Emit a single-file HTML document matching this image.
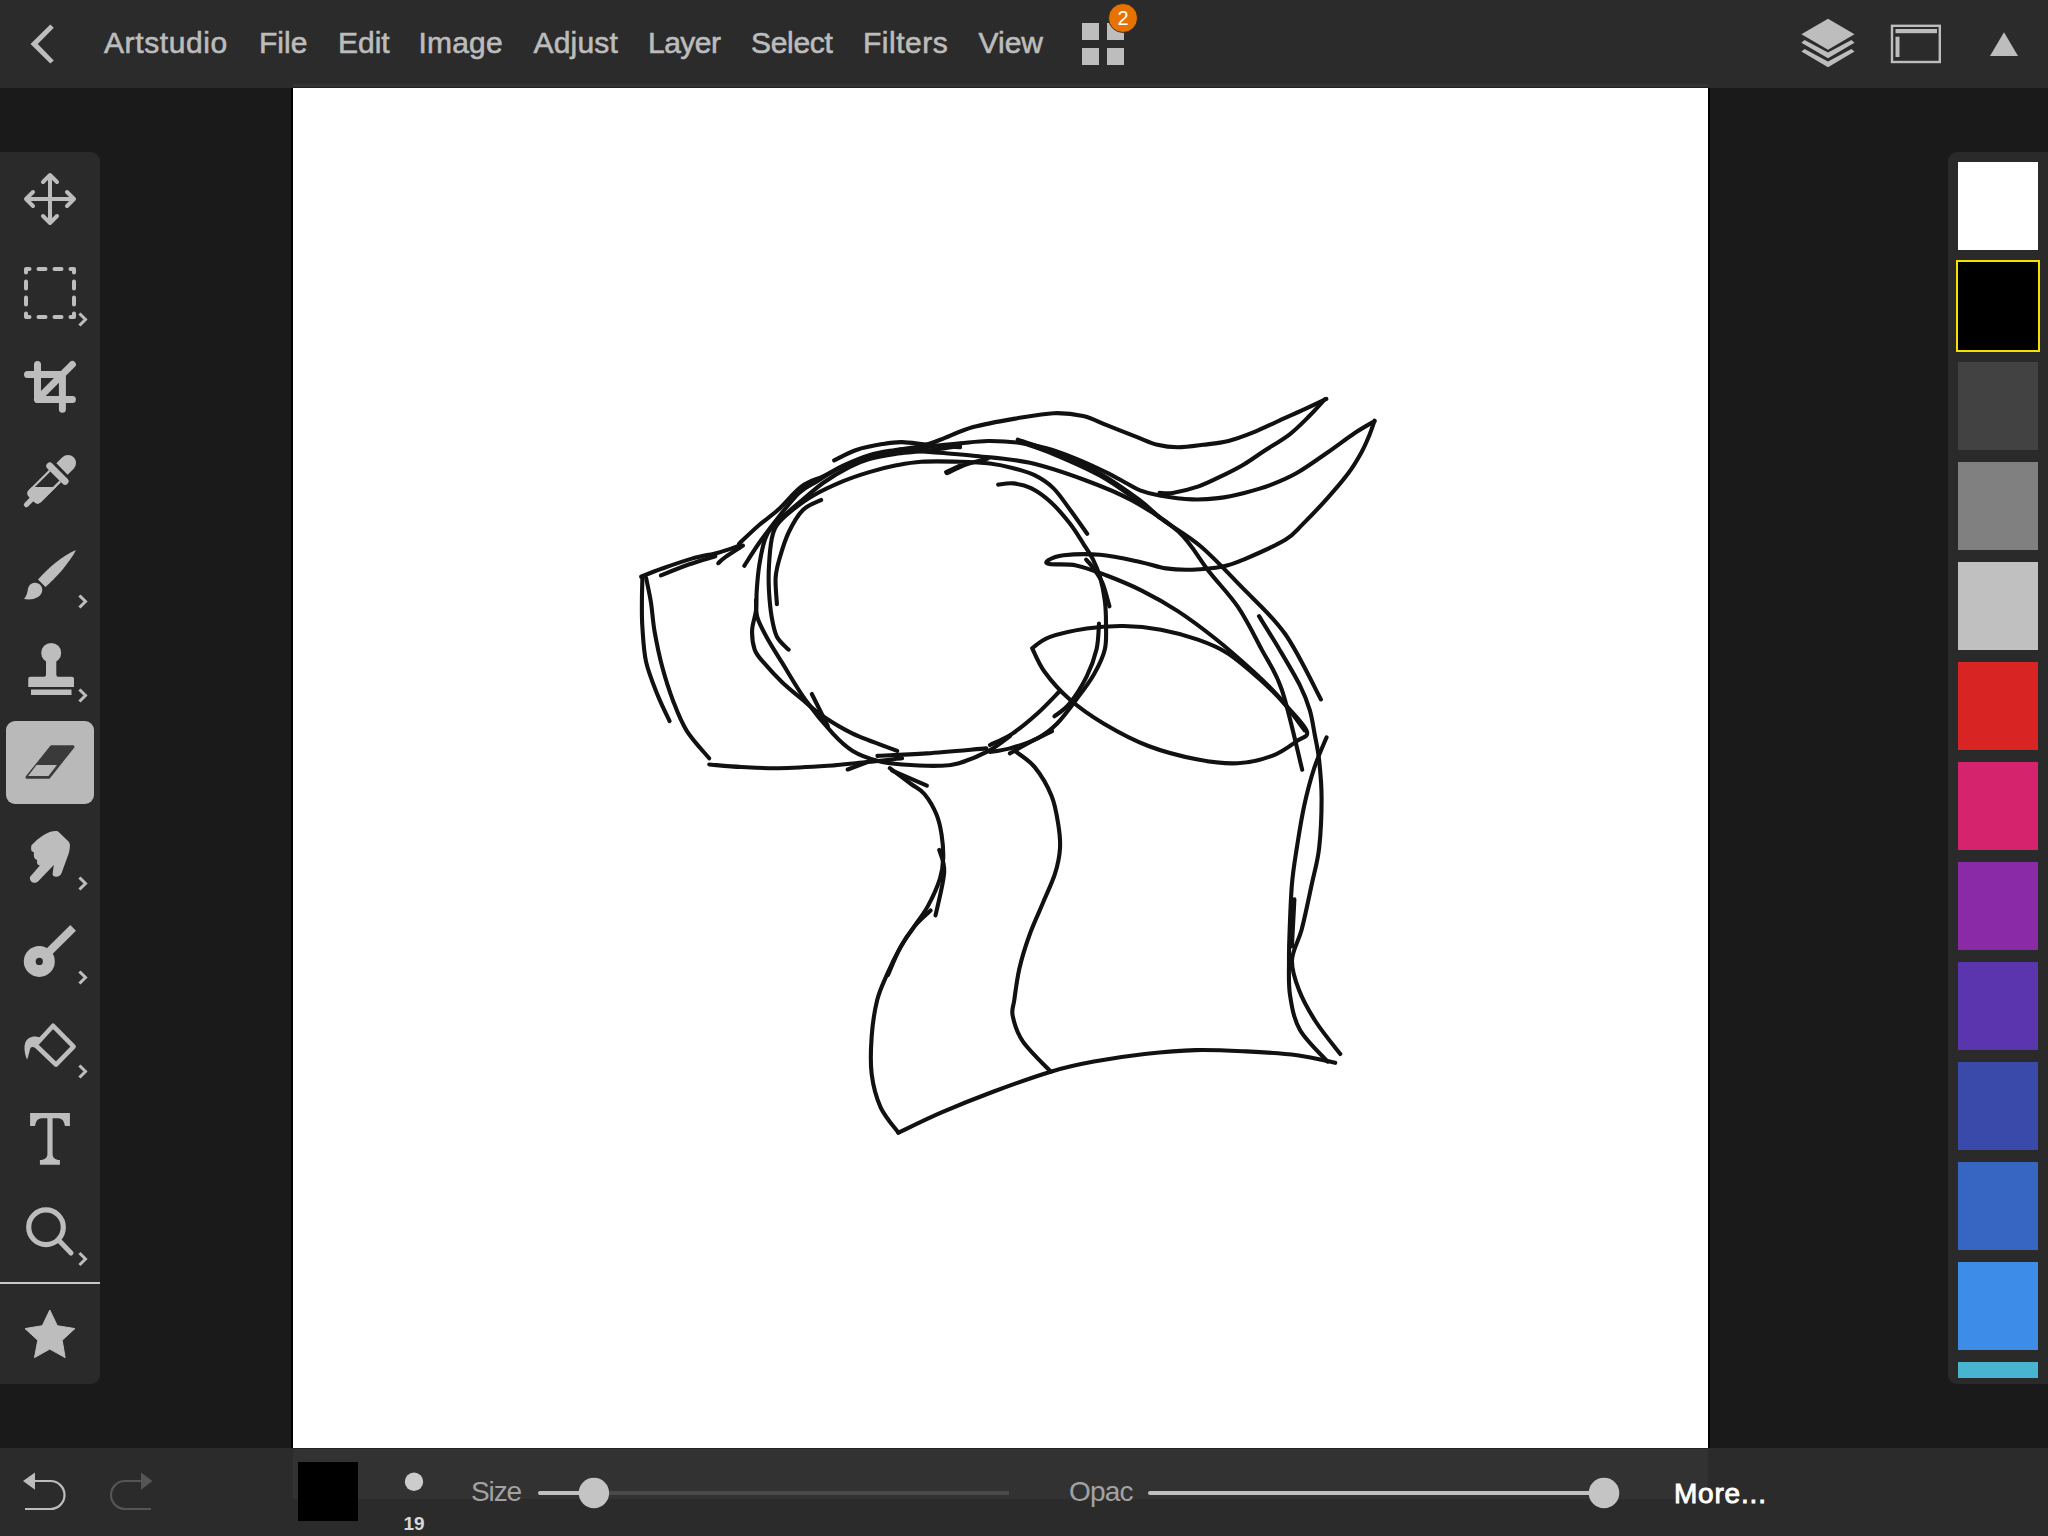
<!DOCTYPE html>
<html><head><meta charset="utf-8">
<style>
html,body{margin:0;padding:0;width:2048px;height:1536px;overflow:hidden;background:#1a1a1a;font-family:"Liberation Sans",sans-serif;}
.a{position:absolute;}
#top{left:0;top:0;width:2048px;height:88px;background:#2b2b2b;}
.m{position:absolute;top:23px;font-size:30px;line-height:40px;color:#bcbcbc;white-space:nowrap;-webkit-text-stroke:0.6px #bcbcbc;}
#canvas{left:293px;top:88px;width:1415px;height:1360px;background:#fff;}
#lb{left:291px;top:88px;width:2px;height:1360px;background:#000;}
#rb{left:1708px;top:88px;width:2px;height:1360px;background:#000;}
#tools{left:0;top:152px;width:100px;height:1232px;background:#2a2a2a;border-radius:0 9px 9px 0;}
#pal{left:1948px;top:152px;width:100px;height:1232px;background:#2a2a2a;border-radius:9px 0 0 9px;overflow:hidden;}
.sw{position:absolute;left:10px;width:80px;height:88px;}
#bot{left:0;top:1448px;width:2048px;height:88px;background:#2b2b2b;}
#botl{left:293px;top:1449px;width:1415px;height:50px;background:#323232;}
#sel{left:6px;top:721px;width:88px;height:83px;background:#b9b9b9;border-radius:9px;}
.t{position:absolute;white-space:nowrap;}
svg{position:absolute;left:0;top:0;}
</style></head><body>
<div id="top" class="a">
  <span class="m" style="left:104px;letter-spacing:0.6px">Artstudio</span>
  <span class="m" style="left:259px">File</span>
  <span class="m" style="left:338px">Edit</span>
  <span class="m" style="left:418.5px;letter-spacing:0.2px">Image</span>
  <span class="m" style="left:533.5px;letter-spacing:0.2px">Adjust</span>
  <span class="m" style="left:648px;letter-spacing:-0.5px">Layer</span>
  <span class="m" style="left:751px;letter-spacing:-0.3px">Select</span>
  <span class="m" style="left:863px;letter-spacing:0.5px">Filters</span>
  <span class="m" style="left:978.5px">View</span>
</div>
<div id="lb" class="a"></div>
<div id="rb" class="a"></div>
<div id="canvas" class="a"></div>
<div class="a" style="left:293px;top:84px;width:1415px;height:3px;background:#333;"></div>
<div class="a" style="left:293px;top:87px;width:1415px;height:1px;background:#202020;"></div>
<div id="tools" class="a"></div>
<div id="sel" class="a"></div>
<div id="pal" class="a">
  <div class="sw" style="top:10px;background:#fff"></div>
  <div class="sw" style="top:110px;background:#000;box-shadow:0 0 0 2px #f5e100"></div>
  <div class="sw" style="top:210px;background:#424242"></div>
  <div class="sw" style="top:310px;background:#808080"></div>
  <div class="sw" style="top:410px;background:#c0c0c0"></div>
  <div class="sw" style="top:510px;background:#d92424"></div>
  <div class="sw" style="top:610px;background:#d6236e"></div>
  <div class="sw" style="top:710px;background:#8a2aa6"></div>
  <div class="sw" style="top:810px;background:#5a35ad"></div>
  <div class="sw" style="top:910px;background:#3a4aaa"></div>
  <div class="sw" style="top:1010px;background:#3766c2"></div>
  <div class="sw" style="top:1110px;background:#3d8ce8"></div>
  <div class="sw" style="top:1210px;height:16px;background:#48b4d0"></div>
</div>
<div id="bot" class="a"></div>
<div id="botl" class="a"></div>
<div class="a" style="left:293px;top:1448px;width:1415px;height:1px;background:#232323;"></div>
<div class="a" style="left:298px;top:1462px;width:60px;height:59px;background:#000;"></div>
<span class="t" style="left:403.5px;top:1513px;font-size:19px;line-height:22px;font-weight:bold;color:#d8d8d8;">19</span>
<span class="t" style="left:471px;top:1476px;font-size:28px;line-height:32px;letter-spacing:-1.1px;color:#a2a2a2;">Size</span>
<span class="t" style="left:1069px;top:1476px;font-size:28px;line-height:32px;letter-spacing:-0.8px;color:#a2a2a2;">Opac</span>
<span class="t" style="left:1674px;top:1478px;font-size:28px;line-height:32px;color:#ffffff;-webkit-text-stroke:0.9px #fff;letter-spacing:0.8px;">More...</span>

<svg width="2048" height="1536" viewBox="0 0 2048 1536">
 <g fill="#bdbdbd" stroke="none">
  <!-- back chevron -->
  <polygon points="30.5,43.9 50.3,24.4 53.8,27.7 37.8,43.9 53.8,60.5 50.3,63.6"/>
  <!-- grid -->
  <rect x="1082" y="23" width="17" height="17"/><rect x="1107" y="23" width="17" height="17"/>
  <rect x="1082" y="48" width="17" height="17"/><rect x="1107" y="48" width="17" height="17"/>
  <!-- layers -->
  <polygon points="1828,18.8 1854.5,34.3 1828,49.7 1801.4,34.3"/>
  <polygon points="1801.4,42.75 1804.6,40.1 1828,52.6 1851.4,40.1 1854.5,42.75 1828,58.3"/>
  <polygon points="1801.4,51.5 1804.6,48.9 1828,61.4 1851.4,48.9 1854.5,51.5 1828,67.2"/>
  <!-- window -->
  <rect x="1892" y="25.8" width="47.8" height="36.2" fill="none" stroke="#bdbdbd" stroke-width="2.4"/>
  <rect x="1895.5" y="29" width="41.5" height="4.2"/>
  <rect x="1895.5" y="36.7" width="4" height="20.3"/>
  <!-- triangle -->
  <polygon points="1990,56 2018,56 2004,32.3"/>
 </g>
 <!-- badge -->
 <circle cx="1123" cy="18" r="14.5" fill="#e67300" stroke="#222" stroke-width="0.8"/>
 <text x="1123" y="25.3" font-family="Liberation Sans" font-size="20" fill="#fff" text-anchor="middle">2</text>

 <!-- toolbar icons -->
 <g fill="none" stroke="#bdbdbd" stroke-linecap="round" stroke-linejoin="round">
  <!-- move -->
  <g stroke-width="4">
   <path d="M50,175 V223 M26,199 H74 M43,182 L50,175 L57,182 M43,216 L50,223 L57,216 M33,192 L26,199 L33,206 M67,192 L74,199 L67,206"/>
  </g>
  <!-- marquee -->
  <rect x="26" y="269" width="48" height="48" stroke-width="4" stroke-dasharray="7 9" stroke-dashoffset="3.5" stroke-linecap="round"/>
  <!-- crop -->
  <path d="M37.5,364.4 V399.4 H72.4 M27.5,374.6 H62.4 V409.3 M37.5,399.4 L72.4,364.4" stroke-width="7"/>
  <!-- chevrons -->
  <g stroke-width="3" stroke-linecap="square" stroke-linejoin="miter">
   <path d="M80.5,314.5 L85.5,319.5 L80.5,324.5"/>
   <path d="M80.5,596.5 L85.5,601.5 L80.5,606.5"/>
   <path d="M80.5,690.5 L85.5,695.5 L80.5,700.5"/>
   <path d="M80.5,878.5 L85.5,883.5 L80.5,888.5"/>
   <path d="M80.5,972.5 L85.5,977.5 L80.5,982.5"/>
   <path d="M80.5,1066.5 L85.5,1071.5 L80.5,1076.5"/>
   <path d="M80.5,1254 L85.5,1259 L80.5,1264"/>
  </g>
 </g>
 <g fill="#bdbdbd">
  <!-- eyedropper -->
  <g transform="translate(50,481) rotate(-45)">
   <path d="M17,-8 H25.5 A8,8 0 0 1 25.5,8 H17 Z"/>
   <line x1="10.5" y1="-10.8" x2="10.5" y2="10.8" stroke="#bdbdbd" stroke-width="7" stroke-linecap="round"/>
   <path d="M7,-7.5 H-21 Q-25,-7.5 -25,-3.5 V3.5 Q-25,7.5 -21,7.5 H7" fill="none" stroke="#bdbdbd" stroke-width="2.2"/>
   <path d="M-17,-8.5 L0,8.5 H-21 Q-26,8.5 -26,3.5 V-3.5 Q-26,-8.5 -21,-8.5 Z"/>
   <line x1="-26" y1="0" x2="-33.5" y2="0" stroke="#bdbdbd" stroke-width="5" stroke-linecap="round"/>
  </g>
  <!-- brush -->
  <path d="M38,579.5 C48,568 62,556 76,550 C70,562 56,578 45.5,587 Z"/>
  <path d="M24,599 C26.5,596.5 27.5,592 27.8,589.8 C28.5,584 33,582.8 35,582.8 C39.5,582.8 42.3,586.5 42.3,589.8 C42.3,593 40.5,595.5 38,597 C34,599.5 28.5,600 24,599 Z"/>
  <!-- stamp -->
  <circle cx="51.2" cy="652.9" r="10"/>
  <path d="M46,658 H56.3 V674.5 Q56.3,676.8 59,676.8 H72 Q74,676.8 74,678.8 V687 H28.25 V678.8 Q28.25,676.8 30.25,676.8 H43.3 Q46,676.8 46,674.5 Z"/>
  <rect x="31" y="689.5" width="40.5" height="5.5"/>
  <!-- smudge -->
  <path d="M55.8,831.1 C57,831.1 58.2,831.5 59.2,832.4 L68.3,841.3 C69.5,842.6 70.2,844.6 69.9,846.8 C69.7,849 69.4,851 68.8,853.2 L61.7,872.7 C60.8,875.3 58.6,876.8 56.3,876.8 C54,876.8 52.4,875.3 52.6,873.7 L53.8,865 L38,881.4 C36.2,883.1 32.9,883.3 31.3,881.5 C29.7,879.7 29.5,877.4 30.3,876.4 L39.9,865.5 C38.7,865.3 37.3,864.6 37.1,863 C36.9,861.8 37.1,860.8 37.1,860 C35.3,859.3 34,857.9 33.9,855.9 C33.8,854.5 33.9,853 33.9,852.2 C32.2,851.8 31.2,850.8 31.2,849.5 C31,847.8 31,846 31.7,845 C35,841.5 39,837.8 43.3,835.2 C47.5,832.7 52,831.1 55.8,831.1 Z"/>
  <!-- burn -->
  <circle cx="39.3" cy="961.4" r="15.5"/>
  <line x1="47.4" y1="953.4" x2="73.15" y2="927.95" stroke="#bdbdbd" stroke-width="8"/><circle cx="39.3" cy="961.4" r="3.6" fill="#2a2a2a"/>
  <!-- fill bucket -->
  <path d="M53.1,1025.8 L73.6,1046.6 L56,1064.6 L35.5,1045 Z" fill="none" stroke="#bdbdbd" stroke-width="4.6" stroke-linejoin="round"/>
  <path d="M40,1037.5 C34,1035 27.5,1037 25.3,1042.5 C23.5,1047.5 25,1055 27.1,1059.6 C28.5,1056 29.2,1052 30.3,1048.4 C31,1047 32.5,1046.5 34.5,1047.5 L41,1041 Z"/>
  <!-- T -->
  <path d="M30.1,1113 H69.9 V1126 H65 C64,1122 63,1118.3 58,1118.3 H52.6 V1154 C52.6,1157.5 55,1160 59.9,1160 V1164.8 H39.9 V1160 C45,1160 47.4,1157.5 47.4,1154 V1118.3 H42 C37,1118.3 36,1122 35,1126 H30.1 Z"/>
  <!-- zoom -->
  <circle cx="46" cy="1227.25" r="17.3" fill="none" stroke="#bdbdbd" stroke-width="5.2"/>
  <line x1="59" y1="1240.5" x2="71" y2="1253" stroke="#bdbdbd" stroke-width="5" stroke-linecap="round"/>
  <!-- separator -->
  <rect x="0" y="1282" width="100" height="2" fill="#c8c8c8"/>
  <!-- star -->
  <path d="M49.8,1310 L57.3,1325.7 L74.9,1328.6 L62.2,1340.3 L65.1,1357.6 L49.8,1349.1 L34.5,1357.6 L37.8,1340.3 L25,1328.6 L42.3,1325.7 Z" stroke="#bdbdbd" stroke-width="1" stroke-linejoin="round"/>
 </g>
 <!-- eraser (selected) -->
 <path d="M51.5,746.8 H73 L48.8,777.2 H27 Z" fill="#3a3a3a" stroke="#3a3a3a" stroke-width="3" stroke-linejoin="round"/>
 <path d="M36.5,765.1 H56.9 L48.5,775.9 H28.1 Z" fill="#b9b9b9"/>

 <!-- undo / redo -->
 <path d="M34.9,1481 H50.5 A14,14 0 0 1 50.5,1509 H25" fill="none" stroke="#bdbdbd" stroke-width="2.2"/>
 <path d="M23,1481 L35,1472.5 L35,1489.7 Z" fill="#bdbdbd"/>
 <path d="M141.2,1481 H125 A14,14 0 0 0 125,1509 H151" fill="none" stroke="#555" stroke-width="2.2"/>
 <path d="M152.4,1481 L141,1472.5 L141,1489.7 Z" fill="#555"/>
 <!-- dot -->
 <circle cx="414" cy="1481.8" r="9.2" fill="#cccccc"/>
 <!-- size slider -->
 <line x1="1009" y1="1493" x2="594" y2="1493" stroke="#4a4a4a" stroke-width="4"/>
 <line x1="540" y1="1493" x2="594" y2="1493" stroke="#c0c0c0" stroke-width="4" stroke-linecap="round"/>
 <circle cx="593.9" cy="1493" r="15.2" fill="#c4c4c4"/>
 <!-- opac slider -->
 <line x1="1150" y1="1493" x2="1604" y2="1493" stroke="#c0c0c0" stroke-width="4" stroke-linecap="round"/>
 <circle cx="1604" cy="1493" r="15.3" fill="#c4c4c4"/>

 <!-- DRAWING -->
 <g id="draw" fill="none" stroke="#111" stroke-width="4.1" stroke-linecap="round" stroke-linejoin="round">
  <path d="M641.1,576.7 C644.6,575.3 653.7,571.5 662.2,568.5 C670.7,565.5 682.4,561.3 691.9,558.6 C701.4,555.9 711.1,554.6 719.1,552.4 C727.1,550.2 736.6,546.5 740.1,545.3"/>
  <path d="M660.9,575.4 C665.6,573.5 680.3,567.5 689.4,564.3 C698.5,561.1 711.1,557.6 715.4,556.2"/>
  <path d="M718.2,563.2 C719.5,562.1 721.9,559.6 726.0,556.7 C730.1,553.8 740.2,547.5 743.0,545.6"/>
  <path d="M642.4,577.9 C642.3,582.0 641.9,594.5 641.9,602.7 C641.9,611.0 641.7,617.5 642.4,627.4 C643.1,637.3 643.6,650.8 646.1,661.9 C648.6,673.0 653.3,684.1 657.2,694.0 C661.1,703.9 667.5,716.7 669.6,721.2"/>
  <path d="M646.1,577.9 C646.9,582.0 649.6,593.7 651.0,602.7 C652.4,611.8 652.8,621.5 654.7,632.2 C656.6,642.9 659.1,655.3 662.2,666.8 C665.3,678.3 669.2,690.7 673.3,701.4 C677.4,712.1 680.9,721.6 686.9,731.1 C692.9,740.6 705.5,753.8 709.2,758.3"/>
  <path d="M709.2,764.5 C714.6,764.9 729.8,766.4 741.3,767.0 C752.8,767.6 764.0,768.4 778.4,768.2 C792.8,768.0 813.0,766.8 827.9,765.8 C842.8,764.8 855.1,763.2 867.5,762.0 C879.9,760.8 896.3,758.9 902.1,758.3"/>
  <path d="M847.7,769.5 L867.5,762.0"/>
  <path d="M739.1,543.7 C742.4,540.7 752.1,531.1 758.6,525.5 C765.1,519.9 770.9,516.3 778.1,509.8 C785.3,503.3 794.0,492.0 801.6,486.4 C809.2,480.8 816.8,479.5 823.7,476.0 C830.6,472.5 835.6,469.1 843.2,465.6 C850.8,462.1 860.6,457.8 869.3,455.2 C878.0,452.6 886.6,451.5 895.3,450.0 C904.0,448.5 913.8,447.8 921.4,446.0 C929.0,444.2 932.3,442.6 940.9,439.5 C949.5,436.4 960.5,430.6 973.2,427.1 C985.9,423.6 1003.8,420.6 1017.2,418.3 C1030.6,416.0 1042.8,413.6 1053.8,413.2 C1064.8,412.8 1074.3,414.1 1083.1,416.1 C1091.9,418.1 1097.7,421.7 1106.7,425.2 C1115.7,428.7 1128.6,433.8 1137.1,437.1 C1145.5,440.4 1150.6,443.1 1157.4,444.8 C1164.2,446.5 1170.2,447.3 1177.8,447.3 C1185.4,447.3 1194.6,445.9 1203.1,444.8 C1211.5,443.7 1220.0,443.0 1228.5,440.9 C1237.0,438.8 1245.4,435.5 1253.9,432.1 C1262.4,428.7 1270.8,424.4 1279.3,420.6 C1287.8,416.8 1296.9,412.8 1304.7,409.2 C1312.5,405.6 1322.7,400.7 1326.3,399.0"/>
  <path d="M1324.9,399.1 C1322.3,401.9 1315.2,410.1 1309.3,416.0 C1303.4,421.9 1297.3,428.4 1289.7,434.3 C1282.1,440.2 1271.3,446.2 1263.7,451.2 C1256.1,456.2 1250.7,460.3 1244.2,464.2 C1237.7,468.1 1232.2,470.9 1224.6,474.6 C1217.0,478.3 1207.3,483.3 1198.6,486.4 C1189.9,489.4 1179.1,491.8 1172.6,492.9 C1166.1,494.0 1161.7,492.9 1159.5,492.9"/>
  <path d="M1374.4,421.3 C1371.1,423.2 1362.6,427.8 1354.8,433.0 C1347.0,438.2 1337.2,445.8 1327.5,452.5 C1317.8,459.2 1305.8,467.9 1296.3,473.3 C1286.8,478.7 1278.9,481.8 1270.2,485.1 C1261.5,488.4 1252.9,490.7 1244.2,492.9 C1235.5,495.1 1226.8,497.0 1218.1,498.1 C1209.4,499.2 1201.9,499.8 1192.1,499.4 C1182.3,499.0 1168.2,497.0 1159.5,495.5 C1150.8,494.0 1145.4,492.3 1140.0,490.3 C1134.6,488.3 1132.8,486.6 1127.0,483.5 C1121.2,480.4 1113.6,475.9 1105.1,471.8 C1096.6,467.7 1085.6,462.5 1075.8,458.6 C1066.0,454.7 1056.3,451.0 1046.5,448.3 C1036.7,445.6 1027.0,443.7 1017.2,442.5 C1007.4,441.3 997.4,440.9 987.9,441.0 C978.4,441.1 968.9,442.6 960.0,443.4 C951.1,444.2 943.0,444.9 934.4,446.0 C925.8,447.1 917.0,448.7 908.3,450.0 C899.6,451.3 891.0,451.9 882.3,453.9 C873.6,455.8 863.9,459.1 856.3,461.7 C848.7,464.3 843.2,466.2 836.7,469.5 C830.2,472.8 823.5,477.3 817.2,481.2 C810.9,485.1 805.5,486.8 799.0,492.9 C792.5,499.0 784.8,509.2 778.1,517.7 C771.4,526.2 764.2,535.7 758.6,543.7 C753.0,551.7 746.7,562.1 744.3,565.8"/>
  <path d="M1374.6,420.6 C1373.7,423.1 1371.4,430.3 1369.2,435.6 C1367.0,440.9 1364.9,446.2 1361.4,452.5 C1357.9,458.8 1354.0,465.7 1348.3,473.3 C1342.6,480.9 1335.1,489.6 1327.5,498.1 C1319.9,506.6 1309.9,517.1 1302.8,524.1 C1295.7,531.1 1294.8,534.1 1285.0,540.0 C1275.2,545.9 1254.6,554.9 1244.2,559.3 C1233.8,563.7 1231.2,564.9 1222.5,566.6 C1213.8,568.3 1201.5,569.4 1192.1,569.7 C1182.7,570.0 1174.7,569.7 1166.0,568.4 C1157.3,567.1 1151.0,564.2 1140.0,561.9 C1129.0,559.6 1112.8,555.9 1100.0,554.8 C1087.2,553.7 1072.1,554.3 1063.5,555.2 C1054.9,556.1 1050.5,558.8 1048.2,560.3 C1045.9,561.8 1044.8,563.2 1049.5,564.1 C1054.2,565.0 1066.7,563.5 1076.2,565.4 C1085.7,567.3 1095.7,571.3 1106.7,575.5 C1117.7,579.7 1130.4,584.9 1142.2,590.8 C1154.0,596.7 1165.5,603.1 1177.8,611.1 C1190.1,619.1 1203.1,628.9 1215.8,639.0 C1228.5,649.1 1243.3,662.3 1253.9,672.0 C1264.5,681.7 1270.8,687.7 1279.3,697.4 C1287.8,707.1 1300.5,724.9 1304.7,730.4"/>
  <path d="M1017.8,439.7 C1023.7,441.8 1039.7,446.3 1053.4,452.0 C1067.2,457.7 1086.0,465.8 1100.3,473.8 C1114.6,481.8 1129.0,492.3 1139.4,500.0 C1149.8,507.7 1152.7,512.1 1162.8,519.8 C1172.9,527.5 1187.2,534.9 1200.3,546.0 C1213.4,557.1 1227.2,572.1 1241.3,586.7 C1255.4,601.3 1271.7,615.0 1285.0,633.8 C1298.3,652.6 1314.9,688.5 1320.9,699.4"/>
  <path d="M1018.6,441.5 C1024.4,443.6 1039.8,448.3 1053.4,454.0 C1067.0,459.7 1086.0,467.8 1100.3,475.8 C1114.6,483.8 1129.5,495.0 1139.4,502.0 C1149.4,509.0 1156.6,515.3 1160.0,518.0"/>
  <path d="M834.1,460.4 C837.8,458.7 848.3,452.7 856.3,450.0 C864.3,447.3 874.7,445.4 882.3,444.1 C889.9,442.8 894.2,442.0 901.8,442.1 C909.4,442.2 918.2,443.8 927.9,444.7 C937.6,445.6 954.6,446.9 960.0,447.3"/>
  <path d="M900.0,449.8 C912.2,450.8 951.5,453.5 973.2,455.7 C994.9,457.9 1011.4,458.8 1030.0,462.8 C1048.6,466.9 1067.8,473.8 1084.7,480.0 C1101.6,486.2 1116.0,491.7 1131.6,500.3 C1147.2,508.9 1165.4,519.6 1178.4,531.6 C1191.4,543.6 1199.5,559.4 1209.4,572.0 C1219.4,584.6 1229.4,594.3 1238.1,607.2 C1246.8,620.1 1254.3,635.6 1261.6,649.4 C1268.9,663.2 1275.1,670.0 1281.9,690.0 C1288.7,710.0 1298.8,756.4 1302.2,769.7"/>
  <path d="M1259.0,616.2 C1262.4,621.7 1272.5,637.8 1279.3,649.2 C1286.1,660.6 1294.5,674.6 1299.6,684.7 C1304.7,694.9 1307.2,701.6 1309.8,710.1 C1312.3,718.6 1313.3,727.0 1314.9,735.5 C1316.5,744.0 1318.1,750.4 1319.2,760.8 C1320.3,771.2 1321.6,783.5 1321.6,797.9 C1321.6,812.3 1320.8,833.0 1319.2,847.4 C1317.6,861.8 1314.6,870.9 1311.7,884.5 C1308.8,898.1 1305.1,916.4 1301.8,929.0 C1298.5,941.6 1292.5,949.8 1292.0,960.0 C1291.5,970.2 1295.0,979.7 1299.0,990.0 C1303.0,1000.3 1309.1,1011.3 1316.0,1022.0 C1322.9,1032.7 1336.2,1048.7 1340.3,1054.0"/>
  <path d="M1326.6,737.3 C1324.5,742.4 1317.9,756.9 1314.2,768.2 C1310.5,779.5 1307.2,792.1 1304.3,805.3 C1301.4,818.5 1299.0,834.2 1296.9,847.4 C1294.8,860.6 1293.1,870.1 1291.9,884.5 C1290.7,898.9 1290.0,921.4 1289.5,934.0 C1289.0,946.6 1288.9,949.8 1289.0,960.0 C1289.1,970.2 1288.2,983.3 1290.0,995.0 C1291.8,1006.7 1293.7,1018.9 1300.0,1030.0 C1306.3,1041.1 1323.0,1056.3 1327.6,1061.6"/>
  <path d="M1294.4,899.4 L1291.9,946.4"/>
  <path d="M960.0,446.0 C953.6,446.9 932.2,450.0 921.4,451.3 C910.6,452.6 904.0,452.6 895.3,453.9 C886.6,455.2 876.9,456.9 869.3,459.1 C861.7,461.3 857.3,463.0 849.7,466.9 C842.1,470.8 831.7,476.9 823.7,482.5 C815.7,488.1 808.1,495.3 801.6,500.7 C795.1,506.1 789.5,510.8 784.7,515.0 C779.9,519.2 776.3,522.0 773.0,526.0 C769.7,530.0 767.4,532.5 765.1,539.0 C762.8,545.5 760.7,556.4 759.3,565.1 C757.9,573.8 757.2,583.5 756.7,591.1 C756.2,598.7 756.8,604.1 756.0,610.6 C755.2,617.1 752.3,623.7 752.1,630.2 C751.9,636.7 752.8,644.3 754.7,649.7 C756.7,655.1 759.2,657.3 763.8,662.7 C768.4,668.1 775.6,676.0 782.1,682.2 C788.6,688.4 796.1,694.3 802.9,700.0 C809.7,705.7 814.7,710.7 823.0,716.3 C831.3,721.9 840.3,727.8 852.7,733.6 C865.1,739.4 889.8,748.0 897.2,750.9"/>
  <path d="M1087.2,533.8 C1084.3,529.7 1075.4,516.8 1069.7,509.2 C1064.0,501.6 1059.2,493.8 1053.3,488.1 C1047.4,482.4 1041.2,478.5 1034.5,475.2 C1027.8,471.9 1020.8,470.1 1013.4,468.2 C1006.0,466.2 998.9,464.6 990.0,463.5 C981.1,462.4 971.4,462.0 960.0,461.7 C948.6,461.4 932.2,461.0 921.4,461.7 C910.6,462.4 904.0,463.9 895.3,465.6 C886.6,467.3 878.0,469.5 869.3,472.1 C860.6,474.7 852.5,477.3 843.2,481.2 C833.9,485.1 822.0,490.5 813.3,495.5 C804.6,500.5 797.2,506.2 791.1,511.1 C785.0,516.0 780.1,520.4 776.9,525.0 C773.7,529.6 773.0,532.3 771.7,539.0 C770.4,545.7 769.5,556.4 769.0,565.1 C768.5,573.8 768.5,582.4 769.0,591.1 C769.5,599.8 770.4,609.5 771.7,617.1 C773.0,624.7 774.1,631.3 776.9,636.7 C779.7,642.1 786.6,647.5 788.6,649.7"/>
  <path d="M998.2,484.6 C1000.7,484.4 1007.9,482.8 1013.4,483.4 C1018.9,484.0 1024.8,485.0 1031.0,488.1 C1037.2,491.2 1044.5,496.3 1050.9,502.2 C1057.4,508.1 1064.2,516.3 1069.7,523.3 C1075.2,530.3 1079.8,538.2 1083.7,544.3 C1087.6,550.3 1090.4,554.1 1093.1,559.6 C1095.8,565.1 1098.1,570.4 1100.1,577.2 C1102.0,584.0 1103.8,592.8 1104.8,600.6 C1105.8,608.4 1106.0,615.9 1106.0,624.0 C1106.0,632.1 1106.8,641.1 1104.8,649.5 C1102.8,657.9 1098.7,666.0 1094.0,674.2 C1089.3,682.5 1082.9,690.8 1076.7,699.0 C1070.5,707.2 1063.5,717.1 1056.9,723.7 C1050.3,730.3 1044.9,734.4 1037.1,738.5 C1029.3,742.6 1017.8,746.1 1009.9,748.4 C1002.0,750.6 993.3,751.4 990.0,752.0"/>
  <path d="M821.1,500.0 C818.1,501.7 808.3,504.6 802.9,510.0 C797.5,515.4 792.5,524.4 788.6,532.5 C784.7,540.6 781.7,551.0 779.5,558.6 C777.3,566.2 776.0,570.5 775.6,578.1 C775.2,585.7 776.7,599.8 776.9,604.1"/>
  <path d="M946.9,473.2 C950.1,471.8 959.1,466.9 965.9,464.5 C972.7,462.1 984.2,459.6 987.9,458.6"/>
  <path d="M946.1,472.1 L960.0,465.6"/>
  <path d="M811.8,694.0 L827.9,726.2"/>
  <path d="M877.4,755.9 C885.6,755.5 908.8,754.6 926.9,753.4 C945.0,752.1 976.4,749.2 986.3,748.4"/>
  <path d="M1099.0,623.5 C1098.6,627.8 1098.6,640.6 1096.5,649.5 C1094.4,658.4 1091.1,667.6 1086.6,676.7 C1082.1,685.8 1074.7,697.3 1069.3,703.9 C1063.9,710.5 1056.9,714.2 1054.4,716.3"/>
  <path d="M1059.4,691.5 C1055.7,695.2 1044.9,706.8 1037.1,713.8 C1029.3,720.8 1020.2,728.4 1012.4,733.6 C1004.5,738.8 993.7,743.1 990.0,745.0"/>
  <path d="M1052.0,731.1 C1048.7,732.8 1039.2,737.3 1032.2,741.0 C1025.2,744.7 1013.6,751.3 1009.9,753.4"/>
  <path d="M1032.2,648.2 C1035.1,646.4 1040.4,640.4 1049.5,637.1 C1058.6,633.8 1074.2,630.4 1086.6,628.5 C1099.0,626.6 1111.3,625.8 1123.7,626.0 C1136.1,626.2 1148.4,627.4 1160.8,629.7 C1173.2,632.0 1186.8,635.7 1197.9,639.6 C1209.0,643.5 1217.3,646.6 1227.6,653.2 C1237.9,659.8 1250.3,670.8 1259.8,679.2 C1269.3,687.7 1276.7,695.2 1284.5,703.9 C1292.3,712.5 1304.7,724.9 1306.8,731.1 C1308.9,737.3 1302.7,736.9 1296.9,741.0 C1291.1,745.1 1282.0,752.2 1272.1,755.9 C1262.2,759.6 1249.9,762.7 1237.5,763.3 C1225.1,763.9 1212.8,762.5 1197.9,759.6 C1183.1,756.7 1164.1,752.0 1148.4,746.0 C1132.7,740.0 1117.1,731.5 1103.9,723.7 C1090.7,715.9 1079.2,707.7 1069.3,699.0 C1059.4,690.3 1050.7,680.2 1044.5,671.7 C1038.3,663.2 1034.2,652.1 1032.2,648.2"/>
  <path d="M889.8,768.2 C893.3,770.8 905.3,779.7 911.1,784.0 C916.9,788.3 920.4,789.1 924.6,794.2 C928.8,799.3 933.7,807.7 936.5,814.5 C939.3,821.3 940.5,827.5 941.6,834.8 C942.7,842.1 943.5,851.2 943.2,858.5 C942.9,865.8 942.4,870.9 939.9,878.8 C937.4,886.7 932.2,898.0 928.0,905.9 C923.8,913.8 919.0,919.4 914.5,926.2 C910.0,933.0 905.4,938.6 900.9,946.5 C896.4,954.4 891.3,964.7 887.4,973.6 C883.5,982.5 879.8,989.6 877.2,1000.0 C874.6,1010.4 872.6,1023.8 871.7,1036.2 C870.8,1048.6 870.2,1062.5 871.7,1074.3 C873.2,1086.1 876.2,1097.6 880.6,1107.3 C885.0,1117.0 895.4,1128.5 898.4,1132.7"/>
  <path d="M892.2,770.7 L926.9,785.6"/>
  <path d="M939.2,849.9 C940.0,853.6 944.8,861.2 944.2,872.1 C943.6,883.0 937.0,908.2 935.5,915.4"/>
  <path d="M930.6,910.5 C927.9,913.1 919.6,920.0 914.5,926.2 C909.4,932.5 904.4,939.9 900.0,948.0 C895.6,956.1 890.0,970.5 888.0,975.0"/>
  <path d="M1014.8,750.9 C1018.1,753.6 1028.6,759.6 1034.7,767.1 C1040.8,774.6 1047.7,786.3 1051.6,795.9 C1055.5,805.5 1056.9,815.9 1058.3,824.6 C1059.7,833.3 1060.5,840.1 1060.0,848.3 C1059.5,856.5 1057.8,864.7 1055.0,873.7 C1052.2,882.7 1047.3,892.3 1043.1,902.5 C1038.9,912.7 1033.5,923.7 1029.6,934.7 C1025.6,945.7 1021.9,957.6 1019.4,968.5 C1016.9,979.4 1015.4,992.1 1014.3,1000.0 C1013.2,1007.9 1011.3,1009.0 1012.7,1015.9 C1014.1,1022.8 1016.4,1032.0 1022.8,1041.3 C1029.1,1050.6 1046.1,1066.6 1050.8,1071.7"/>
  <path d="M898.4,1132.7 C905.6,1129.3 925.9,1119.2 941.6,1112.4 C957.3,1105.6 974.2,1098.8 992.4,1092.0 C1010.6,1085.2 1033.9,1076.8 1050.8,1071.7 C1067.7,1066.6 1078.2,1064.5 1093.9,1061.6 C1109.6,1058.6 1127.8,1055.9 1144.7,1054.0 C1161.6,1052.1 1178.6,1050.5 1195.5,1050.1 C1212.4,1049.7 1229.4,1050.6 1246.3,1051.4 C1263.2,1052.2 1282.3,1053.3 1297.1,1055.2 C1311.9,1057.1 1328.8,1061.5 1335.2,1062.8"/>
  <path d="M756.0,600.0 C756.2,602.9 755.6,611.0 757.3,617.1 C759.0,623.2 762.3,629.1 766.4,636.7 C770.5,644.3 775.6,652.2 782.1,662.7 C788.6,673.2 797.0,688.2 805.5,700.0 C814.0,711.8 825.0,725.1 832.9,733.6 C840.8,742.1 845.3,746.4 852.7,750.9 C860.1,755.4 869.2,758.5 877.4,760.8 C885.6,763.1 891.8,763.7 902.1,764.5 C912.4,765.3 929.7,766.0 939.2,765.8 C948.7,765.6 950.8,765.8 959.0,763.3 C967.2,760.8 980.2,755.4 988.7,750.9 C997.2,746.4 1006.5,738.6 1010.0,736.1"/>
  <path d="M1086.1,559.6 C1087.3,561.0 1090.4,563.9 1093.1,567.8 C1095.8,571.7 1099.8,576.6 1102.5,583.0 C1105.2,589.4 1108.3,602.5 1109.5,606.4"/>
 </g>
</svg>
</body></html>
